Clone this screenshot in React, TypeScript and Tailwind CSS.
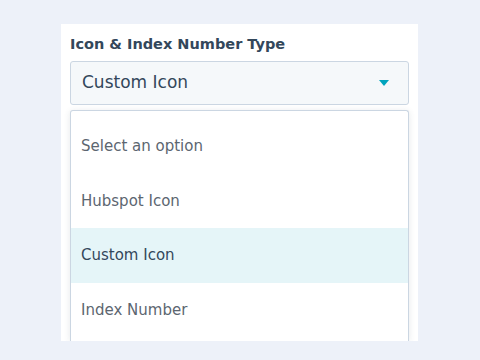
export default function App() {
  const options = ["Select an option", "Hubspot Icon", "Custom Icon", "Index Number"]
  const selected = "Custom Icon"

  return (
    <div className="h-[360px] w-[480px] overflow-hidden bg-[#edf1f9] pt-[24px] pl-[61px] font-['DejaVu_Sans',sans-serif]">
      <div className="flex h-[317px] w-[357px] flex-col overflow-hidden bg-white px-[9px] pt-[10px]">
        <label className="text-[14.5px] font-bold leading-[20px] text-[#33475b]">Icon &amp; Index Number Type</label>

        {/* Select */}
        <div className="mt-[7px] flex h-[44px] items-center justify-between rounded-[3px] border border-[#cbd6e2] bg-[#f5f8fa] pl-[11px] pr-[19px]">
          <span className="text-[17px] text-[#33475b]">{selected}</span>
          <svg width="10" height="6" viewBox="0 0 10 6">
            <path d="M0 0h10L5 6z" fill="#00a4bd" />
          </svg>
        </div>

        {/* Dropdown */}
        <div className="mt-[5px] flex-1 rounded-t-[3px] border border-b-0 border-[#cbd6e2] bg-white pt-[8px] shadow-[0_1px_6px_rgba(45,62,80,0.12)]">
          {options.map((o) => (
            <div
              key={o}
              className={`flex h-[54.5px] items-center px-[10px] text-[15px] ${
                o === selected ? "bg-[#e5f5f8] text-[#33475b]" : "text-[#5c6670]"
              }`}
            >
              {o}
            </div>
          ))}
        </div>
      </div>
    </div>
  )
}
